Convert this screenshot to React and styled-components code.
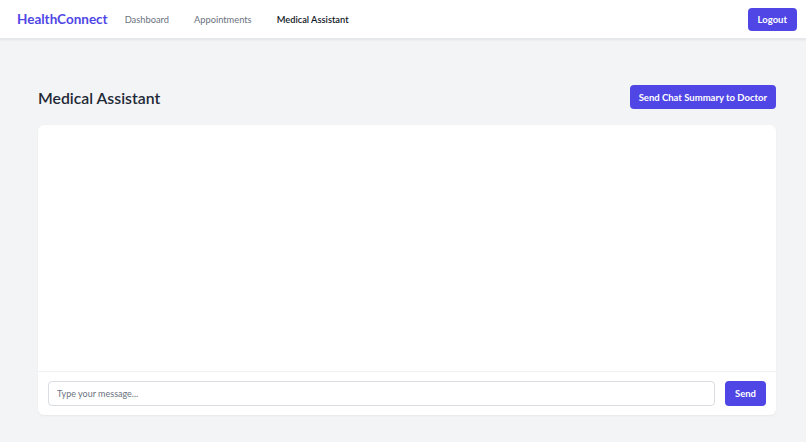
import React from "react";
import styled, { createGlobalStyle } from "styled-components";

const Global = createGlobalStyle`
  html, body { margin: 0; padding: 0; }
  body {
    background: #f3f4f6;
    font-family: Lato, "Noto Sans", sans-serif;
    color: #111827;
  }
  * { box-sizing: border-box; }
`;

const Page = styled.div`
  min-height: 442px;
  display: flex;
  flex-direction: column;
`;

const Nav = styled.nav`
  height: 39px;
  background: #ffffff;
  box-shadow: 0 1px 2px rgba(0, 0, 0, 0.08);
  border-bottom: 1px solid #e5e7eb;
  display: flex;
  align-items: center;
  padding: 0 9px 0 17px;
`;

const Logo = styled.div`
  font-size: 13.5px;
  font-weight: 700;
  color: #4f46e5;
  margin-right: 17px;
`;

const Links = styled.div`
  display: flex;
  gap: 25px;
  flex: 1;
`;

const NavLink = styled.a`
  font-size: 9.3px;
  color: ${(p) => (p.$active ? "#111827" : "#6b7280")};
  font-weight: ${(p) => (p.$active ? 600 : 400)};
  text-decoration: none;
`;

const Button = styled.button`
  background: #4f46e5;
  color: #ffffff;
  border: none;
  border-radius: 4px;
  font-family: inherit;
  font-size: 9.5px;
  font-weight: 700;
  height: ${(p) => p.$h || 24}px;
  padding: 0 ${(p) => p.$px || 11}px;
  cursor: pointer;
`;

const Main = styled.main`
  padding: 46px 30px 0 38px;
  display: flex;
  flex-direction: column;
`;

const HeaderRow = styled.div`
  display: flex;
  align-items: center;
  justify-content: space-between;
  margin-bottom: 16px;
`;

const Title = styled.h1`
  margin: 0;
  font-size: 15.8px;
  font-weight: 600;
  color: #1f2937;
`;

const Card = styled.section`
  background: #ffffff;
  border-radius: 6px;
  box-shadow: 0 1px 2px rgba(0, 0, 0, 0.05);
  height: 290px;
  display: flex;
  flex-direction: column;
`;

const Messages = styled.div`
  flex: 1;
`;

const Footer = styled.div`
  border-top: 1px solid #f0f1f3;
  padding: 9px 10px 9px 10px;
  display: flex;
  gap: 10px;
`;

const Input = styled.input`
  flex: 1;
  height: 25px;
  border: 1px solid #d9dce1;
  border-radius: 4px;
  padding: 0 8px;
  font-family: inherit;
  font-size: 9px;
  color: #111827;
  outline: none;
  &::placeholder { color: #6b7280; }
`;

export default function App() {
  return (
    <Page>
      <Global />
      <Nav>
        <Logo>HealthConnect</Logo>
        <Links>
          <NavLink>Dashboard</NavLink>
          <NavLink>Appointments</NavLink>
          <NavLink $active>Medical Assistant</NavLink>
        </Links>
        <Button $h={23} $px={10}>Logout</Button>
      </Nav>
      <Main>
        <HeaderRow>
          <Title>Medical Assistant</Title>
          <Button $px={9}>Send Chat Summary to Doctor</Button>
        </HeaderRow>
        <Card>
          <Messages />
          <Footer>
            <Input placeholder="Type your message..." />
            <Button $h={25} $px={10}>Send</Button>
          </Footer>
        </Card>
      </Main>
    </Page>
  );
}
